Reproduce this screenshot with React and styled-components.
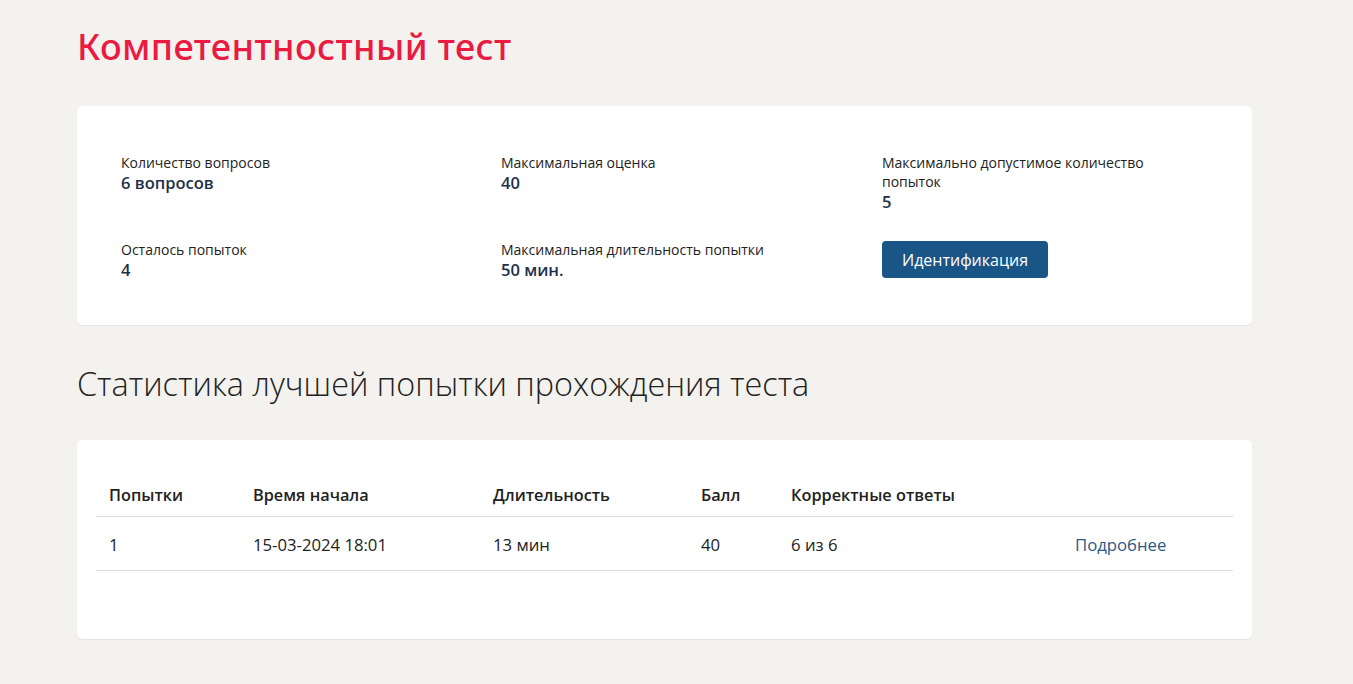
import React from 'react';
import styled, { createGlobalStyle } from 'styled-components';

const COLORS = {
  bg: '#f3f2ef',
  white: '#ffffff',
  red: '#ea1a40',
  navy: '#1d2f4b',
  text: '#222222',
  blue: '#1a5588',
  link: '#2b5a86',
  line: '#dedcd8',
};

const GlobalStyle = createGlobalStyle`
  * { box-sizing: border-box; }
  body {
    margin: 0;
    background: ${COLORS.bg};
    font-family: 'Open Sans', 'Noto Sans', sans-serif;
    color: ${COLORS.text};
  }
`;

const info = [
  { label: 'Количество вопросов', value: '6 вопросов' },
  { label: 'Максимальная оценка', value: '40' },
  { label: 'Максимально допустимое количество попыток', value: '5' },
  { label: 'Осталось попыток', value: '4' },
  { label: 'Максимальная длительность попытки', value: '50 мин.' },
];

const columns = [
  { title: 'Попытки', width: 144 },
  { title: 'Время начала', width: 240 },
  { title: 'Длительность', width: 208 },
  { title: 'Балл', width: 90 },
  { title: 'Корректные ответы', width: 284 },
  { title: '', width: null },
];

const rows = [
  ['1', '15-03-2024 18:01', '13 мин', '40', '6 из 6'],
];

const App = () => (
  <Page>
    <GlobalStyle />
    <Title>Компетентностный тест</Title>

    <InfoCard>
      <InfoGrid>
        {info.map((item) => (
          <InfoItem key={item.label}>
            <Label>{item.label}</Label>
            <Value>{item.value}</Value>
          </InfoItem>
        ))}
        <InfoItem>
          <Button type="button">Идентификация</Button>
        </InfoItem>
      </InfoGrid>
    </InfoCard>

    <SubTitle>Статистика лучшей попытки прохождения теста</SubTitle>

    <TableCard>
      <Table>
        <thead>
          <tr>
            {columns.map((col, i) => (
              <Th key={i} style={col.width ? { width: col.width } : undefined}>
                {col.title}
              </Th>
            ))}
          </tr>
        </thead>
        <tbody>
          {rows.map((row, i) => (
            <tr key={i}>
              {row.map((cell, j) => (
                <Td key={j}>{cell}</Td>
              ))}
              <Td>
                <Link href="#">Подробнее</Link>
              </Td>
            </tr>
          ))}
        </tbody>
      </Table>
    </TableCard>
  </Page>
);

export default App;

const Page = styled.div`
  padding: 22px 101px 45px 77px;
  min-height: 684px;
`;

const Title = styled.h1`
  margin: 0;
  font-family: 'Noto Sans', 'Open Sans', sans-serif;
  font-weight: 500;
  font-size: 36px;
  letter-spacing: 0.4px;
  line-height: 50px;
  color: ${COLORS.red};
`;

const Card = styled.div`
  background: ${COLORS.white};
  border-radius: 5px;
  box-shadow: 0 1px 1px rgba(0, 0, 0, 0.06);
`;

const InfoCard = styled(Card)`
  margin-top: 34px;
  padding: 47px 44px 45px 44px;
`;

const InfoGrid = styled.div`
  display: grid;
  grid-template-columns: 380px 381px 290px;
  row-gap: 28px;
`;

const InfoItem = styled.div`
  display: flex;
  flex-direction: column;
`;

const Label = styled.div`
  font-size: 14px;
  line-height: 19px;
  color: ${COLORS.text};
`;

const Value = styled.div`
  font-size: 16.5px;
  font-weight: 600;
  line-height: 21px;
  color: ${COLORS.navy};
`;

const Button = styled.button`
  align-self: flex-start;
  margin-top: 1px;
  height: 37px;
  padding: 0 20px;
  border: none;
  border-radius: 4px;
  background: ${COLORS.blue};
  color: ${COLORS.white};
  font-family: 'Open Sans', 'Noto Sans', sans-serif;
  font-size: 16px;
  cursor: pointer;
`;

const SubTitle = styled.h2`
  margin: 37px 0 0;
  font-family: 'Open Sans', 'Noto Sans', sans-serif;
  font-weight: 300;
  font-size: 32.4px;
  line-height: 42px;
  color: ${COLORS.text};
`;

const TableCard = styled(Card)`
  margin-top: 36px;
  padding: 36px 19px 68px;
`;

const Table = styled.table`
  width: 100%;
  border-collapse: collapse;
`;

const Th = styled.th`
  text-align: left;
  padding: 8px 13px 10px;
  font-size: 16.3px;
  font-weight: 600;
  color: ${COLORS.text};
  border-bottom: 1px solid ${COLORS.line};
`;

const Td = styled.td`
  padding: 16px 13px 14px;
  font-size: 16.7px;
  color: ${COLORS.text};
  border-bottom: 1px solid ${COLORS.line};
`;

const Link = styled.a`
  color: ${COLORS.link};
  text-decoration: none;
`;
